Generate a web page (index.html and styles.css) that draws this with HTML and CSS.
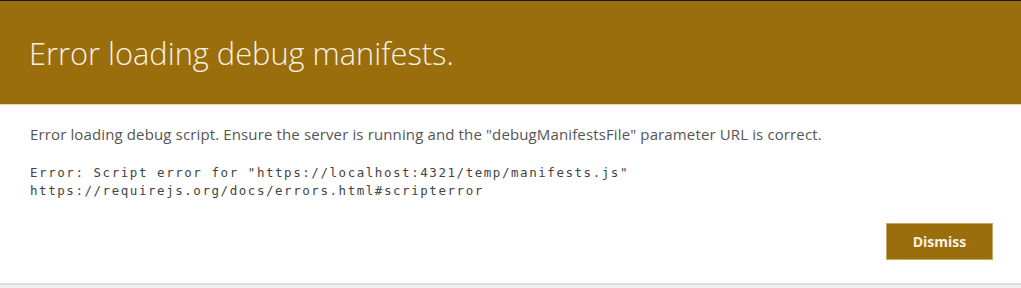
FILE: index.html
```html
<!DOCTYPE html>
<html>
<head>
<meta charset="utf-8">
<link rel="stylesheet" href="styles.css">
</head>
<body>
<div class="dialog">
  <header class="dialog-header">
    <h1 class="dialog-title">Error loading debug manifests.</h1>
  </header>
  <div class="dialog-body">
    <p class="message">Error loading debug script. Ensure the server is running and the "debugManifestsFile" parameter URL is correct.</p>
    <pre class="details">Error: Script error for "https://localhost:4321/temp/manifests.js"
https://requirejs.org/docs/errors.html#scripterror</pre>
    <div class="actions">
      <button class="btn-dismiss" type="button">Dismiss</button>
    </div>
  </div>
</div>
<div class="page-footer"></div>
</body>
</html>
```
FILE: styles.css
```css
html, body {
  margin: 0;
  padding: 0;
  background: #f2f2f2;
}
.dialog {
  background: #ffffff;
  border-top: 1px solid #1a1a1a;
  box-sizing: border-box;
  border-bottom: 2px solid #dcdcdc;
  height: 285px;
}
.dialog-header {
  background: #9a6e0c;
  height: 103px;
  border-bottom: 1px solid #ead9a6;
  display: flex;
  align-items: center;
  padding-left: 29px;
}
.dialog-title {
  margin: 0;
  font-family: "Open Sans", "Liberation Sans", sans-serif;
  font-weight: 300;
  font-size: 30.8px;
  color: #f8f1e3;
}
.dialog-body {
  padding: 19px 28px 0 30px;
}
.message {
  margin: 0;
  font-family: "Open Sans", "Liberation Sans", sans-serif;
  font-size: 15px;
  letter-spacing: 0.13px;
  line-height: 20px;
  color: #555555;
}
.details {
  margin: 20px 0 0 0;
  font-family: "DejaVu Sans Mono", monospace;
  font-size: 12.5px;
  letter-spacing: 1.55px;
  line-height: 18px;
  color: #444444;
}
.actions {
  display: flex;
  justify-content: flex-end;
  margin-top: 23px;
}
.btn-dismiss {
  width: 107px;
  height: 37px;
  background: #9a6e0c;
  border: 1px solid #c8a860;
  color: #f8f1e3;
  font-family: "Open Sans", "Liberation Sans", sans-serif;
  font-weight: 700;
  font-size: 14px;
  padding: 0;
}
```
